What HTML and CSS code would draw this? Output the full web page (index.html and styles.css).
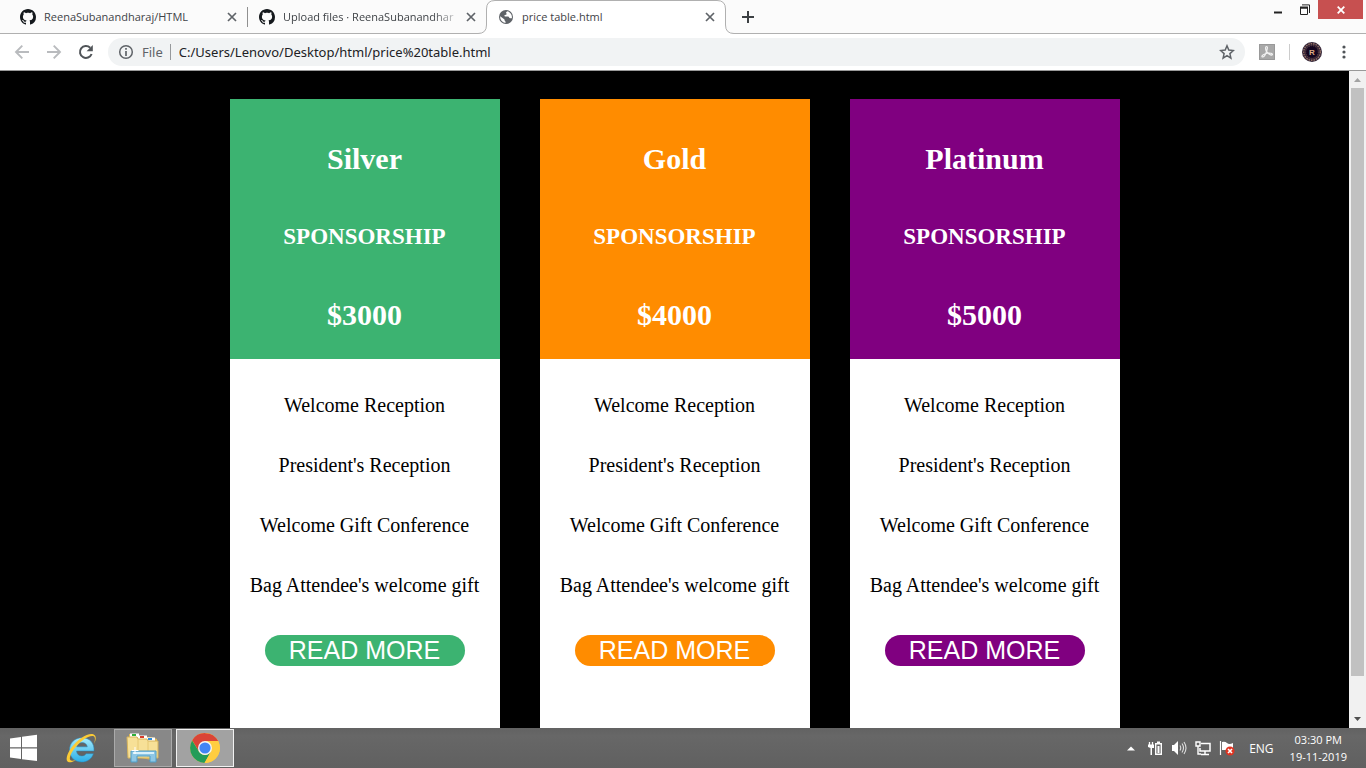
FILE: index.html
```html
<!DOCTYPE html>
<html lang="en">
<head>
<meta charset="utf-8">
<title>price table.html</title>
<link rel="stylesheet" href="styles.css">
</head>
<body>
<svg class="defs" aria-hidden="true">
  <symbol id="github" viewBox="0 0 16 16"><path d="M8 0C3.58 0 0 3.58 0 8c0 3.54 2.29 6.53 5.47 7.59.4.07.55-.17.55-.38 0-.19-.01-.82-.01-1.49-2.01.37-2.53-.49-2.69-.94-.09-.23-.48-.94-.82-1.13-.28-.15-.68-.52-.01-.53.63-.01 1.08.58 1.23.82.72 1.21 1.87.87 2.33.66.07-.52.28-.87.51-1.07-1.78-.2-3.64-.89-3.64-3.95 0-.87.31-1.59.82-2.15-.08-.2-.36-1.02.08-2.12 0 0 .67-.21 2.2.82.64-.18 1.32-.27 2-.27s1.36.09 2 .27c1.53-1.04 2.2-.82 2.2-.82.44 1.1.16 1.92.08 2.12.51.56.82 1.27.82 2.15 0 3.07-1.87 3.75-3.65 3.95.29.25.54.73.54 1.48 0 1.07-.01 1.93-.01 2.2 0 .21.15.46.55.38A8.01 8.01 0 0 0 16 8c0-4.42-3.58-8-8-8z" fill="#15191d"/></symbol>
  <symbol id="cross" viewBox="0 0 10 10"><path d="M1 1l8 8M9 1L1 9" stroke="#5f6368" stroke-width="1.7" fill="none"/></symbol>
</svg>

<header class="tabstrip">
  <nav class="tabs" aria-label="Tabs">
    <div class="tab">
      <svg class="favicon"><use href="#github"/></svg>
      <a class="tab-title" href="#">ReenaSubanandharaj/HTML</a>
      <button class="tab-close" aria-label="Close tab"><svg width="10" height="10"><use href="#cross"/></svg></button>
    </div>
    <div class="tab tab-divided">
      <svg class="favicon"><use href="#github"/></svg>
      <a class="tab-title tab-title-faded" href="#">Upload files · ReenaSubanandhar</a>
      <button class="tab-close" aria-label="Close tab"><svg width="10" height="10"><use href="#cross"/></svg></button>
    </div>
    <div class="tab tab-active">
      <svg class="tab-shape" viewBox="0 0 256 34" aria-hidden="true"><path d="M0 33.5Q8.500 33.500 8.500 25V9Q8.500 .5 17 .5H239Q247.500.5 247.500 9V25Q247.500 33.500 256 33.500V34H0z" fill="#fff"/><path d="M0 33.500Q8.500 33.500 8.500 25V9Q8.500 .5 17 .5H239Q247.500 .5 247.500 9V25Q247.500 33.500 256 33.500" fill="none" stroke="#b0b0b0"/></svg>
      <svg class="favicon" viewBox="0 0 16 16"><circle cx="8" cy="8" r="7" fill="#5f6368"/><path d="M9.500 2.300C8 3 7.600 3.700 8.500 4.600c.7.700-.3 1.400-1.500 1.300-.9 0-.7 1.200-.1 1.500H10c1.200 0 1.100 1.900 2.300 1.900h1.500A6 6 0 0 0 9.500 2.300zM2.200 7.200l4 3.100c.7.700.2 1.600 1.300 2.100v1.500A6 6 0 0 1 2.200 7.200z" fill="#fff"/></svg>
      <a class="tab-title" href="#" aria-current="page">price table.html</a>
      <button class="tab-close" aria-label="Close tab"><svg width="10" height="10"><use href="#cross"/></svg></button>
    </div>
  </nav>
  <button class="new-tab" aria-label="New tab"><svg width="12" height="12" viewBox="0 0 12 12"><path d="M6 0v12M0 6h12" stroke="#3c4043" stroke-width="2"/></svg></button>
  <div class="window-controls">
    <button class="window-button" aria-label="Minimize"><svg width="12" height="12" viewBox="0 0 12 12"><path d="M2 8.500h8" stroke="#222" stroke-width="2"/></svg></button>
    <button class="window-button" aria-label="Restore"><svg width="12" height="12" viewBox="0 0 12 12"><path d="M1.500 4h7v6.500h-7z" fill="none" stroke="#222"/><path d="M1 3.500h8" stroke="#222" stroke-width="2"/><path d="M3 .9h7.500V9" fill="none" stroke="#222"/></svg></button>
    <button class="window-button window-close" aria-label="Close"><svg width="8" height="8" viewBox="0 0 8 8"><path d="M.7.7l6.600 6.600M7.300.7L.7 7.300" stroke="#fff" stroke-width="1.800"/></svg></button>
  </div>
</header>

<div class="toolbar">
  <button class="tool" aria-label="Back"><svg viewBox="0 0 16 16"><path d="M15 8H2M8.300 1.700L2 8l6.300 6.300" fill="none" stroke="#b9bbbe" stroke-width="1.900"/></svg></button>
  <button class="tool" aria-label="Forward"><svg viewBox="0 0 16 16"><path d="M1 8h13M7.700 1.700L14 8l-6.300 6.300" fill="none" stroke="#b9bbbe" stroke-width="1.900"/></svg></button>
  <button class="tool" aria-label="Reload"><svg viewBox="0 0 16 16"><path d="M13.600 10A6 6 0 1 1 12.200 3.700" fill="none" stroke="#505458" stroke-width="2"/><path d="M14.800 1v6.200H8.600z" fill="#505458"/></svg></button>
  <div class="omnibox">
    <svg class="info" viewBox="0 0 16 16"><circle cx="8" cy="8" r="6.300" fill="none" stroke="#5f6368" stroke-width="1.500"/><path d="M8 7v5M8 4v1.700" stroke="#5f6368" stroke-width="1.700"/></svg>
    <label class="scheme" for="address">File</label>
    <input class="address" id="address" type="text" value="C:/Users/Lenovo/Desktop/html/price%20table.html">
    <button class="star" aria-label="Bookmark this page"><svg width="16" height="16" viewBox="0 0 16 16"><path d="M8 1.800l1.800 4.300 4.600.4-3.500 3.100 1 4.500L8 11.700l-3.900 2.400 1-4.500-3.500-3.100 4.600-.4z" fill="none" stroke="#5f6368" stroke-width="1.500"/></svg></button>
  </div>
  <button class="extension" aria-label="PDF extension"><svg width="16" height="16" viewBox="0 0 16 16"><path d="M0 0h16v16H0z" fill="#a8a8a8"/><path d="M.5.5h15v15H.5z" fill="none" stroke="#999"/><path d="M7.500 2.500c1.500 0 .8 2.500.2 4.500-.8 2.500-2.500 6-4 6s-.8-2 2-3 6-1.200 7.300-.3-.4 2-2.200.8C8 8.800 6.500 6 6.600 3.800c0-.8.300-1.300.9-1.300z" fill="none" stroke="#f2f2f2" stroke-width="1.200"/></svg></button>
  <button class="profile" aria-label="Profile"><svg width="20" height="20" viewBox="0 0 20 20"><circle cx="10" cy="10" r="10" fill="#322437"/><circle cx="10" cy="10" r="8.300" fill="none" stroke="#947064" stroke-width="1.400" stroke-dasharray="1.500 1"/><circle cx="10" cy="10" r="6.300" fill="#140620" stroke="#6b4648" stroke-dasharray="1 1"/><text class="profile-initial" x="10" y="13" text-anchor="middle">R</text></svg></button>
  <button class="more" aria-label="Menu"><svg width="4" height="14" viewBox="0 0 4 14"><g fill="#505458"><circle cx="2" cy="2" r="1.600"/><circle cx="2" cy="7" r="1.600"/><circle cx="2" cy="12" r="1.600"/></g></svg></button>
</div>

<div class="viewport">
  <main class="page">
    <section class="card silver">
      <div class="card-head"><h1>Silver</h1><h2>SPONSORSHIP</h2><p class="price">$3000</p></div>
      <ul class="benefits"><li>Welcome Reception</li><li>President's Reception</li><li>Welcome Gift Conference</li><li>Bag Attendee's welcome gift</li></ul>
      <button class="read-more">READ MORE</button>
    </section>
    <section class="card gold">
      <div class="card-head"><h1>Gold</h1><h2>SPONSORSHIP</h2><p class="price">$4000</p></div>
      <ul class="benefits"><li>Welcome Reception</li><li>President's Reception</li><li>Welcome Gift Conference</li><li>Bag Attendee's welcome gift</li></ul>
      <button class="read-more">READ MORE</button>
    </section>
    <section class="card platinum">
      <div class="card-head"><h1>Platinum</h1><h2>SPONSORSHIP</h2><p class="price">$5000</p></div>
      <ul class="benefits"><li>Welcome Reception</li><li>President's Reception</li><li>Welcome Gift Conference</li><li>Bag Attendee's welcome gift</li></ul>
      <button class="read-more">READ MORE</button>
    </section>
  </main>
  <div class="scrollbar" aria-hidden="true">
    <svg width="7" height="17" viewBox="0 0 7 17"><path d="M0 11l3.500-4L7 11z" fill="#a3a3a3"/></svg>
    <div class="track"><div class="thumb"></div></div>
    <svg width="7" height="17" viewBox="0 0 7 17"><path d="M0 6l3.500 4L7 6z" fill="#505050"/></svg>
  </div>
</div>

<footer class="taskbar">
  <button class="task start" aria-label="Start"><svg width="28" height="28" viewBox="0 0 28 28"><path d="M0 4.500L11 3v10.300H0zM12 2.800L27 .8v12.500H12zM0 14.500h11V25L0 23.500zM12 14.500h15V27L12 25.200z" fill="#fff"/></svg></button>
  <button class="task" aria-label="Internet Explorer"><svg width="32" height="32" viewBox="0 0 32 32"><defs><linearGradient id="ie" x2="0" y2="1"><stop stop-color="#a7ebfc"/><stop offset="1" stop-color="#2aaee8"/></linearGradient></defs><path d="M29 19H11.500c.3 3.300 2.500 5 5.200 5 2.100 0 3.500-.9 4.300-2.300h7.400C26.800 26.800 22.300 30 16.700 30 9.500 30 4.500 25 4.500 18S9.800 5.800 16.900 5.800C24.700 5.800 29.600 11 29 19zM11.700 14.800h10.600c-.3-2.600-2.400-4.200-5.200-4.200-2.900 0-4.900 1.600-5.400 4.200z" fill="url(#ie)" stroke="#2488bc" stroke-width=".5"/><path d="M29 12c2.800-5.200 2.200-9.300-1.500-10C22.200 1 12.300 7.500 6.500 15.500 1.500 22.500.3 28.600 3.300 30c1.800.8 4.500-.1 7.500-2-5 1.700-7 .3-5.500-4 1.700-5 6.500-11.200 12.500-15.700C24 3.800 28.700 3 29.700 5.500c.5 1.500.2 3.800-.7 6.500z" fill="#fbcb36"/></svg></button>
  <button class="task task-open" aria-label="File Explorer"><svg width="34" height="32" viewBox="0 0 34 32"><path d="M3 2l10 1 2 2h10l6 2v19l-5 2L3 24z" fill="#dfb958"/><path d="M4 1.500h9V5H4z" fill="#fff"/><path d="M6 2h4v2H6z" fill="#2fae39"/><path d="M12 3.500h9V7h-9z" fill="#fff"/><path d="M14 4h4v2h-4z" fill="#d83c2a"/><path d="M20 5.500h9V9h-9z" fill="#fff"/><path d="M22 6h4v2h-4z" fill="#308cd9"/><path d="M1 5h10l1 2h9l1 2h10v17H2z" fill="#f7e097" stroke="#d7b45c"/><path d="M12 7v18M22 9v16" stroke="#e6c872"/><path d="M5 30V19h25v11h-6v-6H11v6z" fill="#8ec7e5" stroke="#4f9dc7"/><path d="M7 21h21" stroke="#d8f1fb" stroke-width="2"/><path d="M9 15v7M5.500 18.500h7" stroke="#fff"/></svg></button>
  <button class="task task-open task-current" aria-label="Google Chrome"><svg width="30" height="30" viewBox="0 0 30 30"><circle cx="15" cy="15" r="14.900" fill="#ffcd40"/><path d="M2.200 7.300A15 15 0 0 1 28.200 8H15L9 18.500z" fill="#da4437"/><path d="M2.100 7.500L9 18.500a7 7 0 0 0 12 0L14.500 30A15 15 0 0 1 2.100 7.500z" fill="#249c58"/><path d="M15 8h13.200A15 15 0 0 1 14.500 30L21 18.500z" fill="#ffcd40"/><circle cx="15" cy="15" r="7" fill="#f5f5f5"/><circle cx="15" cy="15" r="5.600" fill="#4285f4"/></svg></button>
  <div class="tray">
    <button class="tray-button" aria-label="Show hidden icons"><svg viewBox="0 0 16 16"><path d="M4 10.500l4-4 4 4z" fill="#fff"/></svg></button>
    <button class="tray-button" aria-label="Power"><svg viewBox="0 0 16 16"><path d="M2.500 2v3M5.500 2v3" stroke="#fff" stroke-width="1.300"/><path d="M1 4.500h6V8H5v7H3.500V8L1 7z" fill="#fff"/><path d="M8.700 3.700h5.600v10.600H8.700z" fill="none" stroke="#fff" stroke-width="1.400"/><path d="M10 1.500h3V3h-3zM10.500 6h2v7h-2z" fill="#fff"/></svg></button>
    <button class="tray-button" aria-label="Volume"><svg viewBox="0 0 16 16"><path d="M1 5h2l4-4v14l-4-4H1z" fill="#fff"/><path d="M9 5.500q1.500 2.500 0 5M11 3.500q3 4.500 0 9M13 2q4 6 0 12" fill="none" stroke="#ddd" stroke-width="1.100"/></svg></button>
    <button class="tray-button" aria-label="Network"><svg viewBox="0 0 16 16"><path d="M6 3.500h9v7.500H5V8M10 11v3M6 14.500h8" fill="none" stroke="#fff" stroke-width="1.500"/><path d="M1 2h4v4H1zM3 6v8h3" fill="none" stroke="#fff" stroke-width="1.400"/></svg></button>
    <button class="tray-button" aria-label="Action Center"><svg viewBox="0 0 16 16"><path d="M1.500 1v14" stroke="#fff" stroke-width="1.200"/><path d="M3 2q3-1 5 1t6 0v7H3z" fill="#fff"/><circle cx="11" cy="11" r="4.500" fill="#df3422"/><path d="M9 9l4 4M13 9l-4 4" stroke="#fff" stroke-width="1.600"/></svg></button>
    <button class="language">ENG</button>
    <div class="clock"><time>03:30 PM</time><time datetime="2019-11-19">19-11-2019</time></div>
  </div>
</footer>
</body>
</html>
```
FILE: styles.css
```css
* { box-sizing: border-box; }
body {
  display: flex;
  flex-direction: column;
  height: 100vh;
  margin: 0;
  overflow: hidden;
  background: #000;
  font-family: "Open Sans", "Noto Sans", sans-serif;
}
button { padding: 0; border: 0; background: none; font: inherit; color: inherit; }
svg { display: block; flex: none; }
.defs { position: absolute; width: 0; height: 0; }

.tabstrip {
  display: flex;
  flex: none;
  height: 34px;
  padding-left: 8px;
  border-bottom: 1px solid #b0b0b0;
  background: #fbfbfb;
}
.tabs { display: flex; height: 34px; }
.tab {
  position: relative;
  display: flex;
  align-items: center;
  width: 239px;
  padding: 0 10px 0 12px;
}
.tab-divided::before {
  content: "";
  position: absolute;
  left: 0;
  width: 1px;
  height: 20px;
  background: #909090;
}
.tab-shape { position: absolute; top: 0; left: -8px; width: 256px; height: 34px; }
.favicon { position: relative; width: 16px; height: 16px; }
.tab-title {
  position: relative;
  flex: 1;
  margin: 0 0 0 8px;
  color: #3f4347;
  font-size: 11px;
  line-height: 20px;
  text-decoration: none;
  white-space: nowrap;
}
.tab-title-faded { mask-image: linear-gradient(to right, #000 82%, transparent 98%); }
.tab-close { position: relative; display: grid; place-items: center; width: 10px; height: 16px; }
.new-tab { display: grid; place-items: center; width: 28px; margin-left: 9px; }
.window-controls { display: flex; margin-left: auto; padding-right: 3px; }
.window-button { display: grid; place-items: center; width: 27px; height: 19px; }
.window-close { width: 45px; background: #c75050; }

.toolbar {
  display: flex;
  flex: none;
  align-items: center;
  height: 37px;
  padding: 0 6px;
  border-bottom: 1px solid #999;
  background: #fff;
}
.tool { display: grid; place-items: center; width: 32px; height: 28px; }
.tool svg, .info { width: 16px; height: 16px; }
.omnibox {
  display: flex;
  flex: 1;
  align-items: center;
  height: 28px;
  margin-left: 6px;
  padding: 0 10px;
  border-radius: 14px;
  background: #f1f3f4;
  font-family: "Noto Sans", "Open Sans", sans-serif;
  font-size: 13px;
}
.scheme { margin: 0 8px; padding-right: 7px; border-right: 1px solid #96999c; color: #5f6368; line-height: 16px; }
.address { flex: 1; min-width: 0; padding: 0; border: 0; outline: 0; background: none; color: #202124; font: inherit; }
.extension { margin-left: 14px; }
.profile { margin-left: 14px; padding-left: 12px; border-left: 1px solid #ccc; height: 16px; display: flex; align-items: center; }
.profile-initial { fill: #dba984; font: bold 8px "Liberation Sans", sans-serif; }
.more { display: grid; place-items: center; width: 16px; margin: 0 8px 0 14px; }

.viewport { display: flex; flex: 1; min-height: 0; }
.page {
  display: flex;
  flex: 1;
  justify-content: center;
  gap: 40px;
  padding-top: 28px;
  overflow: hidden;
  background: #000;
  font-family: "Liberation Serif", "Times New Roman", serif;
}
.card { width: 270px; background: #fff; text-align: center; font-size: 20px; }
.silver { --tone: #3cb371; }
.gold { --tone: #ff8c00; }
.platinum { --tone: #800080; }
.card-head { height: 260px; padding-top: 21px; background: var(--tone); color: #fff; }
.card-head h1, .card-head h2, .price { margin: 0; font-size: 30px; font-weight: bold; line-height: 78px; }
.card-head h2 { font-size: 23px; }
.benefits { margin: 0; padding: 16px 0 0; list-style: none; line-height: 60px; }
.read-more {
  width: 200px;
  height: 31px;
  margin-top: 20px;
  border-radius: 16px;
  background: var(--tone);
  color: #fff;
  font: 25px/31px "Liberation Sans", Arial, sans-serif;
}
.scrollbar { display: flex; flex-direction: column; align-items: center; width: 17px; background: #f1f1f1; }
.track { flex: 1; width: 13px; }
.thumb { height: 588px; max-height: 95%; background: #c1c1c1; }

.taskbar {
  display: flex;
  flex: none;
  align-items: center;
  gap: 4px;
  height: 40px;
  padding-right: 19px;
  background: linear-gradient(#626262, #676767 20%, #606060);
  color: #fff;
  font-size: 12px;
}
.task { display: grid; place-items: center; width: 58px; height: 38px; }
.start { width: 48px; }
.task-open { border: 1px solid #aaa; background: #888; }
.task-current { border-color: #f2f2f2; background: #a2a2a2; }
.tray { display: flex; align-items: center; gap: 8px; margin-left: auto; }
.tray-button svg { width: 16px; height: 16px; }
.language { margin: 0 8px 0 6px; }
.clock { display: flex; flex-direction: column; text-align: center; font-size: 11px; line-height: 17px; }
```
